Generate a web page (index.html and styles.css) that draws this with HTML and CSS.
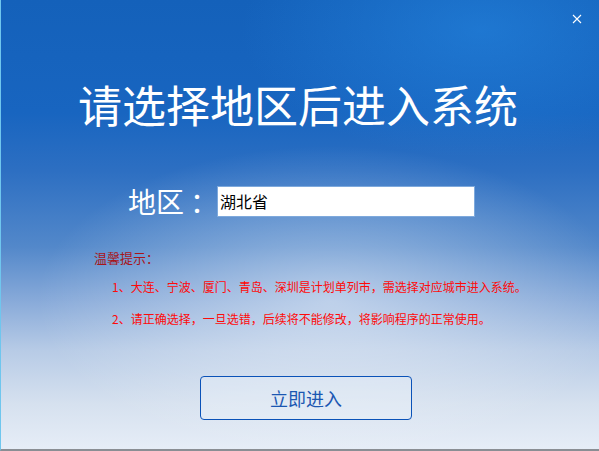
FILE: index.html
```html
<!DOCTYPE html>
<html>
<head>
	<meta name="viewport" content="width=device-width, initial-scale=1.0">
	<link rel="stylesheet" href="styles.css">
</head>
<body>
    <div class="window">
        <div class="titlebar">
            <span class="close">
                <svg width="10" height="10" viewBox="0 0 10 10"><path d="M1 1L9 9M9 1L1 9" stroke="#fff" stroke-width="1.1"/></svg>
            </span>
        </div>

        <div class="heading">请选择地区后进入系统</div>

        <div class="area">
            <label class="area-label" for="region">地区<span class="colon">：</span></label>
            <input type="text" id="region" class="area-input" value="湖北省">
        </div>

        <div class="tips">
            <div class="tips-head">温馨提示：</div>
            <p>1、大连、宁波、厦门、青岛、深圳是计划单列市，需选择对应城市进入系统。</p>
            <p>2、请正确选择，一旦选错，后续将不能修改，将影响程序的正常使用。</p>
        </div>

        <div class="enter">
            <button class="btn">立即进入</button>
        </div>
    </div>
</body>
</html>
```

FILE: styles.css
```css
body{
    margin: 0;
    padding: 0;
    font-family: "Noto Sans CJK SC", "Noto Sans", sans-serif;
}

.window{
    width: 599px;
    height: 451px;
    box-sizing: border-box;
    border-left: 1px solid #6fc6ee;
    border-bottom: 2px solid #8a8e94;
    overflow: hidden;
    background:
        radial-gradient(ellipse 420px 220px at 330px 300px, rgba(255,255,255,0.45), rgba(255,255,255,0) 70%),
        radial-gradient(ellipse 300px 160px at 480px 30px, rgba(40,140,230,0.5), rgba(40,140,230,0) 80%),
        linear-gradient(to bottom, #1461ba 0%, #1865c0 25%, #2d6fc2 38%, #5388ca 55%, #88aad9 67%, #b7cbe6 78%, #d6e1ef 90%, #e6edf7 100%);
}

.titlebar{
    height: 14px;
    display: flex;
    justify-content: flex-end;
    padding-top: 14px;
    padding-right: 17px;
}

.close{
    width: 10px;
    height: 10px;
    display: flex;
}

.heading{
    margin-top: 51px;
    text-align: center;
    color: #fff;
    font-size: 44px;
    line-height: 50px;
    margin-right: 4px;
}

.area{
    margin-top: 56px;
    display: flex;
    align-items: center;
    padding-left: 127px;
}

.area-label{
    flex-shrink: 0;
    white-space: nowrap;
    color: #fff;
    font-size: 28px;
    line-height: 32px;
    width: 89px;
}

.colon{
    margin-left: 6px;
}

.area-input{
    flex-shrink: 0;
    width: 258px;
    height: 31px;
    box-sizing: border-box;
    border: 1px solid #7ea9dc;
    padding: 0 2px;
    font-family: "Noto Sans CJK SC", sans-serif;
    font-size: 16px;
    color: #000;
    outline: none;
}

.tips{
    margin-top: 33px;
    padding-left: 93px;
}

.tips-head{
    color: #a8151a;
    font-size: 13px;
    line-height: 16px;
}

.tips p{
    margin: 0;
    padding-left: 18px;
    color: #ff0a0a;
    font-size: 12px;
    line-height: 16px;
}

.tips p:first-of-type{
    margin-top: 13px;
}

.tips p + p{
    margin-top: 16px;
}

.enter{
    margin-top: 49px;
    padding-left: 199px;
}

.btn{
    width: 212px;
    height: 44px;
    border: 1px solid #0a52b8;
    border-radius: 4px;
    background: rgba(240,244,252,0.3);
    color: #1b57b2;
    font-family: "Noto Sans CJK SC", sans-serif;
    font-size: 18px;
    cursor: pointer;
}
```
